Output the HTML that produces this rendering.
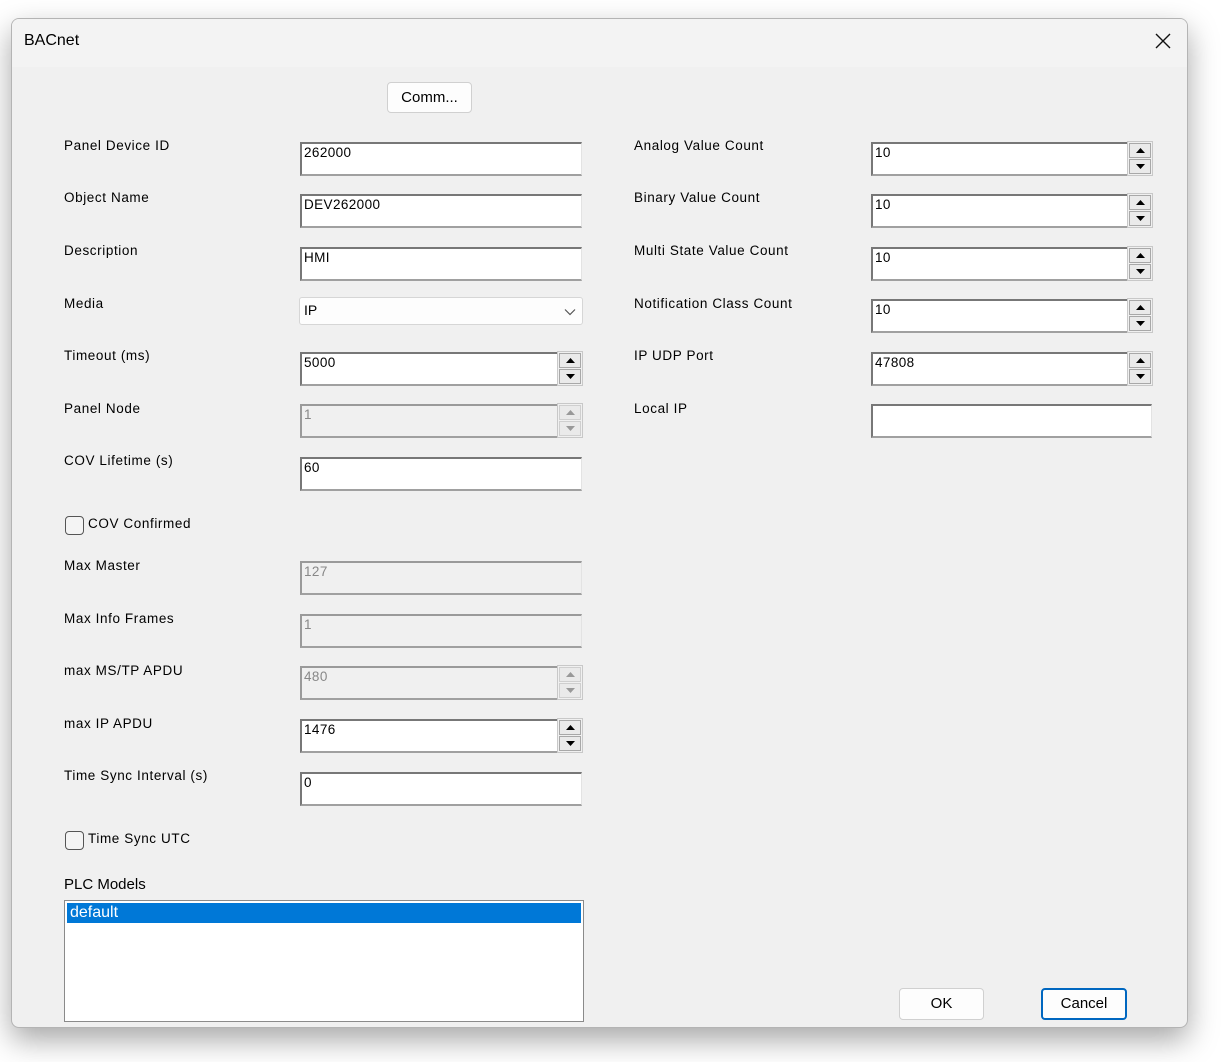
<!DOCTYPE html>
<html><head><meta charset="utf-8">
<style>
*{box-sizing:border-box;margin:0;padding:0}
body{width:1223px;height:1062px;background:#fff;position:relative;overflow:hidden;font-family:"Liberation Sans",sans-serif;}
.win{position:absolute;left:11px;top:18px;width:1177px;height:1010px;background:#f0f0f0;border:1px solid #b4b4b4;border-radius:8px;box-shadow:0 12px 30px rgba(0,0,0,0.35);overflow:hidden}
.title{position:absolute;left:0;top:0;width:100%;height:48px;background:#f3f3f3}
.title span{position:absolute;left:12px;top:13px;font-size:16px;color:#000}
.x{position:absolute;left:1143px;top:14px}
.a{position:absolute}
.lbl{position:absolute;font-size:13.5px;color:#000;letter-spacing:0.6px;white-space:nowrap}
.ed{position:absolute;background:#fff;border-top:2px solid #777;border-left:2px solid #777;border-right:1px solid #e3e3e3;border-bottom:2px solid #a0a0a0;font-size:13.5px;padding:1px 2px;letter-spacing:0.4px;color:#000}
.ed.dis{background:#f0f0f0;color:#888;border-top-color:#9a9a9a;border-left-color:#9a9a9a}
.sp{position:absolute;width:26px;border:1px solid #c8c8c8;background:#f0f0f0}
.sp div{height:15px;margin:1px;border:1px solid #a8a8a8;background:#eaeaea;display:flex;align-items:center;justify-content:center}
.sp.dis div{border-color:#cfcfcf}
.cb{position:absolute;width:19px;height:19px;border:1px solid #555;border-radius:4px;background:#f4f4f4}
.btn{position:absolute;background:#fdfdfd;border:1px solid #d0d0d0;border-radius:4px;font-size:15px;text-align:center;color:#000}
</style></head><body>
<div class="win">
 <div class="title"><span>BACnet</span>
  <svg class="x" width="16" height="16" viewBox="0 0 16 16"><path d="M1 1L15 15M15 1L1 15" stroke="#111" stroke-width="1.4"/></svg>
 </div>
</div>
<div class="btn" style="left:387px;top:82px;width:85px;height:31px;line-height:29px">Comm...</div>

<div class="lbl" style="left:64px;top:138px">Panel Device ID</div>
<div class="lbl" style="left:64px;top:190px">Object Name</div>
<div class="lbl" style="left:64px;top:243px">Description</div>
<div class="lbl" style="left:64px;top:296px">Media</div>
<div class="lbl" style="left:64px;top:348px">Timeout (ms)</div>
<div class="lbl" style="left:64px;top:401px">Panel Node</div>
<div class="lbl" style="left:64px;top:453px">COV Lifetime (s)</div>
<div class="lbl" style="left:88px;top:516px">COV Confirmed</div>
<div class="lbl" style="left:64px;top:558px">Max Master</div>
<div class="lbl" style="left:64px;top:611px">Max Info Frames</div>
<div class="lbl" style="left:64px;top:663px">max MS/TP APDU</div>
<div class="lbl" style="left:64px;top:716px">max IP APDU</div>
<div class="lbl" style="left:64px;top:768px">Time Sync Interval (s)</div>
<div class="lbl" style="left:88px;top:831px">Time Sync UTC</div>
<div class="lbl" style="left:64px;top:876px;font-size:15px;letter-spacing:0">PLC Models</div>

<div class="cb" style="left:65px;top:516px"></div>
<div class="cb" style="left:65px;top:831px"></div>

<div class="ed" style="left:300px;top:142px;width:282px;height:34px">262000</div>
<div class="ed" style="left:300px;top:194px;width:282px;height:34px">DEV262000</div>
<div class="ed" style="left:300px;top:247px;width:282px;height:34px">HMI</div>
<div class="a" style="left:299px;top:297px;width:284px;height:28px;background:#fdfdfd;border:1px solid #d6d6d6;border-radius:3px;font-size:14px;padding:4px 4px">IP
 <svg style="position:absolute;right:6px;top:10px" width="12" height="8" viewBox="0 0 12 8"><path d="M1 1.5L6 6.5L11 1.5" stroke="#555" fill="none" stroke-width="1.2"/></svg></div>
<div class="ed" style="left:300px;top:352px;width:258px;height:34px">5000</div>
<div class="sp" style="left:557px;top:351px;height:35px"><div><svg width="9" height="5"><path d="M0 5L4.5 0L9 5Z" fill="#000"/></svg></div><div><svg width="9" height="5"><path d="M0 0L4.5 5L9 0Z" fill="#000"/></svg></div></div>
<div class="ed dis" style="left:300px;top:404px;width:258px;height:34px">1</div>
<div class="sp dis" style="left:557px;top:403px;height:35px"><div><svg width="9" height="5"><path d="M0 5L4.5 0L9 5Z" fill="#999"/></svg></div><div><svg width="9" height="5"><path d="M0 0L4.5 5L9 0Z" fill="#999"/></svg></div></div>
<div class="ed" style="left:300px;top:457px;width:282px;height:34px">60</div>
<div class="ed dis" style="left:300px;top:561px;width:282px;height:34px">127</div>
<div class="ed dis" style="left:300px;top:614px;width:282px;height:34px">1</div>
<div class="ed dis" style="left:300px;top:666px;width:258px;height:34px">480</div>
<div class="sp dis" style="left:557px;top:665px;height:35px"><div><svg width="9" height="5"><path d="M0 5L4.5 0L9 5Z" fill="#999"/></svg></div><div><svg width="9" height="5"><path d="M0 0L4.5 5L9 0Z" fill="#999"/></svg></div></div>
<div class="ed" style="left:300px;top:719px;width:258px;height:34px">1476</div>
<div class="sp" style="left:557px;top:718px;height:35px"><div><svg width="9" height="5"><path d="M0 5L4.5 0L9 5Z" fill="#000"/></svg></div><div><svg width="9" height="5"><path d="M0 0L4.5 5L9 0Z" fill="#000"/></svg></div></div>
<div class="ed" style="left:300px;top:772px;width:282px;height:34px">0</div>

<div class="a" style="left:64px;top:900px;width:520px;height:122px;background:#fff;border:1px solid #8a8a8a;padding:2px">
 <div style="background:#0078d7;color:#fff;font-size:16px;height:20px;line-height:20px;padding-left:3px">default</div>
</div>

<div class="lbl" style="left:634px;top:138px">Analog Value Count</div>
<div class="lbl" style="left:634px;top:190px">Binary Value Count</div>
<div class="lbl" style="left:634px;top:243px">Multi State Value Count</div>
<div class="lbl" style="left:634px;top:296px">Notification Class Count</div>
<div class="lbl" style="left:634px;top:348px">IP UDP Port</div>
<div class="lbl" style="left:634px;top:401px">Local IP</div>

<div class="ed" style="left:871px;top:142px;width:257px;height:34px">10</div>
<div class="sp" style="left:1127px;top:141px;height:35px"><div><svg width="9" height="5"><path d="M0 5L4.5 0L9 5Z" fill="#000"/></svg></div><div><svg width="9" height="5"><path d="M0 0L4.5 5L9 0Z" fill="#000"/></svg></div></div>
<div class="ed" style="left:871px;top:194px;width:257px;height:34px">10</div>
<div class="sp" style="left:1127px;top:193px;height:35px"><div><svg width="9" height="5"><path d="M0 5L4.5 0L9 5Z" fill="#000"/></svg></div><div><svg width="9" height="5"><path d="M0 0L4.5 5L9 0Z" fill="#000"/></svg></div></div>
<div class="ed" style="left:871px;top:247px;width:257px;height:34px">10</div>
<div class="sp" style="left:1127px;top:246px;height:35px"><div><svg width="9" height="5"><path d="M0 5L4.5 0L9 5Z" fill="#000"/></svg></div><div><svg width="9" height="5"><path d="M0 0L4.5 5L9 0Z" fill="#000"/></svg></div></div>
<div class="ed" style="left:871px;top:299px;width:257px;height:34px">10</div>
<div class="sp" style="left:1127px;top:298px;height:35px"><div><svg width="9" height="5"><path d="M0 5L4.5 0L9 5Z" fill="#000"/></svg></div><div><svg width="9" height="5"><path d="M0 0L4.5 5L9 0Z" fill="#000"/></svg></div></div>
<div class="ed" style="left:871px;top:352px;width:257px;height:34px">47808</div>
<div class="sp" style="left:1127px;top:351px;height:35px"><div><svg width="9" height="5"><path d="M0 5L4.5 0L9 5Z" fill="#000"/></svg></div><div><svg width="9" height="5"><path d="M0 0L4.5 5L9 0Z" fill="#000"/></svg></div></div>
<div class="ed" style="left:871px;top:404px;width:281px;height:34px"></div>

<div class="btn" style="left:899px;top:988px;width:85px;height:32px;line-height:30px">OK</div>
<div class="btn" style="left:1041px;top:988px;width:86px;height:32px;line-height:28px;border:2px solid #0067c0">Cancel</div>
</body></html>
